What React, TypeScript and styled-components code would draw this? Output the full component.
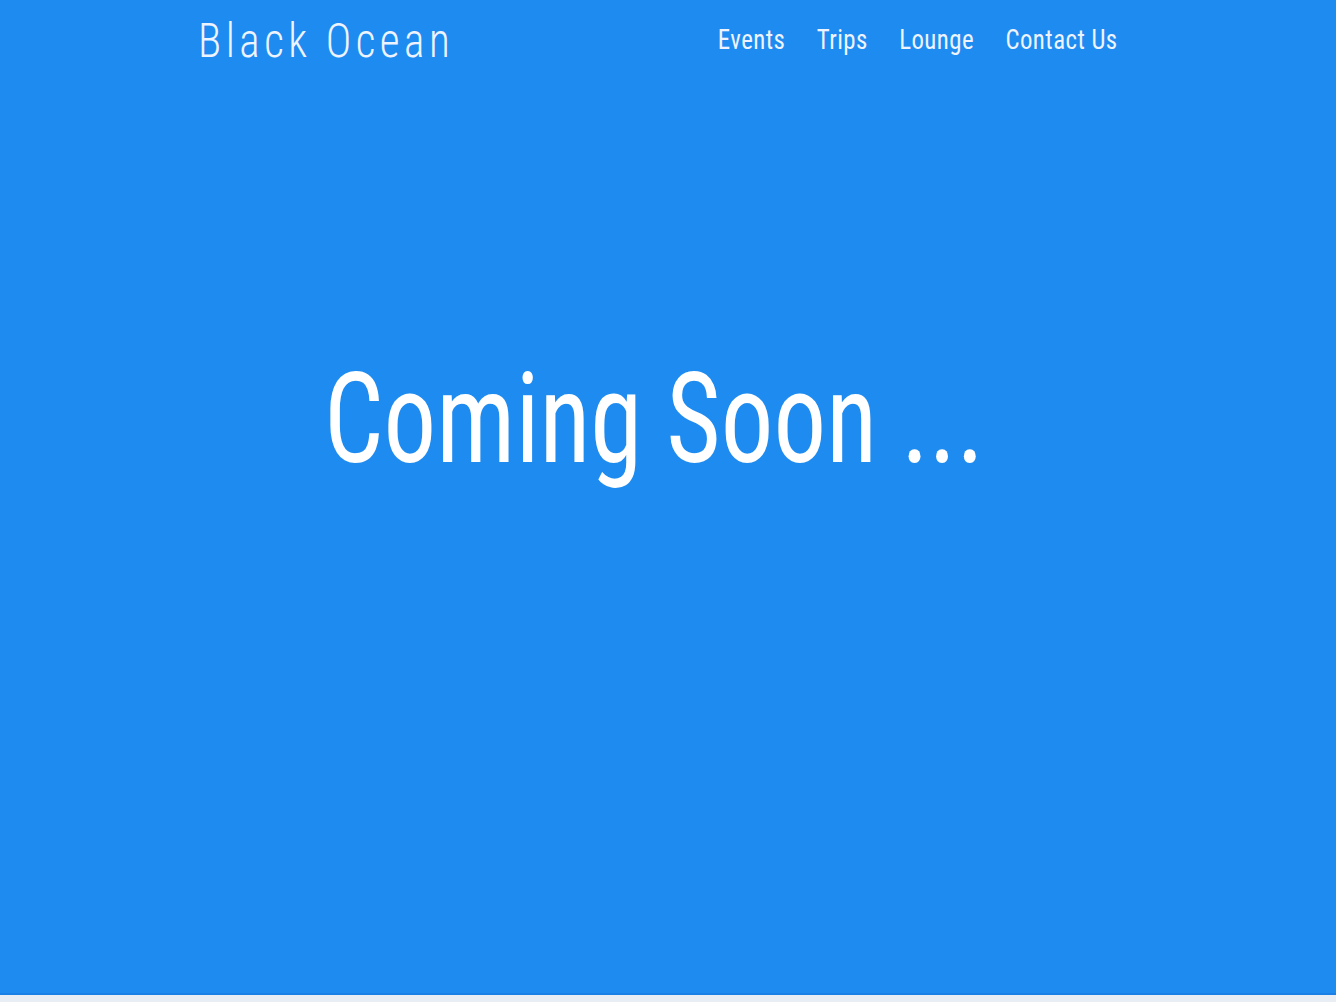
import React from "react";
import styled, { createGlobalStyle } from "styled-components";

const Global = createGlobalStyle`
  html, body { margin: 0; padding: 0; background: #e9eef4; }
  body { font-family: "Roboto Condensed", Roboto, "Liberation Sans", sans-serif; }
  #root { min-height: 100vh; }
`;

const Page = styled.div`
  display: flex;
  flex-direction: column;
  height: 995px;
  background: #1e8bf0;
  border-bottom: 2px solid #1a80e6;
  box-sizing: border-box;
  color: #fff;
`;

const Header = styled.header`
  display: flex;
  align-items: center;
  justify-content: space-between;
  padding: 12px 218px 0 198px;
  height: 68px;
  box-sizing: border-box;
`;

const Brand = styled.div`
  font-size: 48px;
  font-weight: 300;
  letter-spacing: 5px;
  color: #eef4ff;
  transform: scaleX(0.9);
  transform-origin: left center;
  white-space: nowrap;
`;

const Nav = styled.nav`
  display: flex;
  gap: 34px;
  transform: scaleX(0.92);
  transform-origin: right center;
`;

const NavLink = styled.a`
  font-size: 27px;
  font-weight: 400;
  color: #eef4ff;
  text-decoration: none;
  letter-spacing: 0.5px;
  white-space: nowrap;
`;

const Hero = styled.main`
  flex: 1;
  display: flex;
  justify-content: center;
  padding-top: 287px;
  padding-right: 28px;
`;

const Title = styled.h1`
  margin: 0;
  font-size: 127px;
  font-weight: 400;
  line-height: 1;
  white-space: nowrap;
  transform: scaleX(0.827);
`;

export default function App() {
  return (
    <>
      <Global />
      <Page>
        <Header>
          <Brand>Black Ocean</Brand>
          <Nav>
            <NavLink href="#">Events</NavLink>
            <NavLink href="#">Trips</NavLink>
            <NavLink href="#">Lounge</NavLink>
            <NavLink href="#">Contact Us</NavLink>
          </Nav>
        </Header>
        <Hero>
          <Title>Coming Soon ...</Title>
        </Hero>
      </Page>
    </>
  );
}
